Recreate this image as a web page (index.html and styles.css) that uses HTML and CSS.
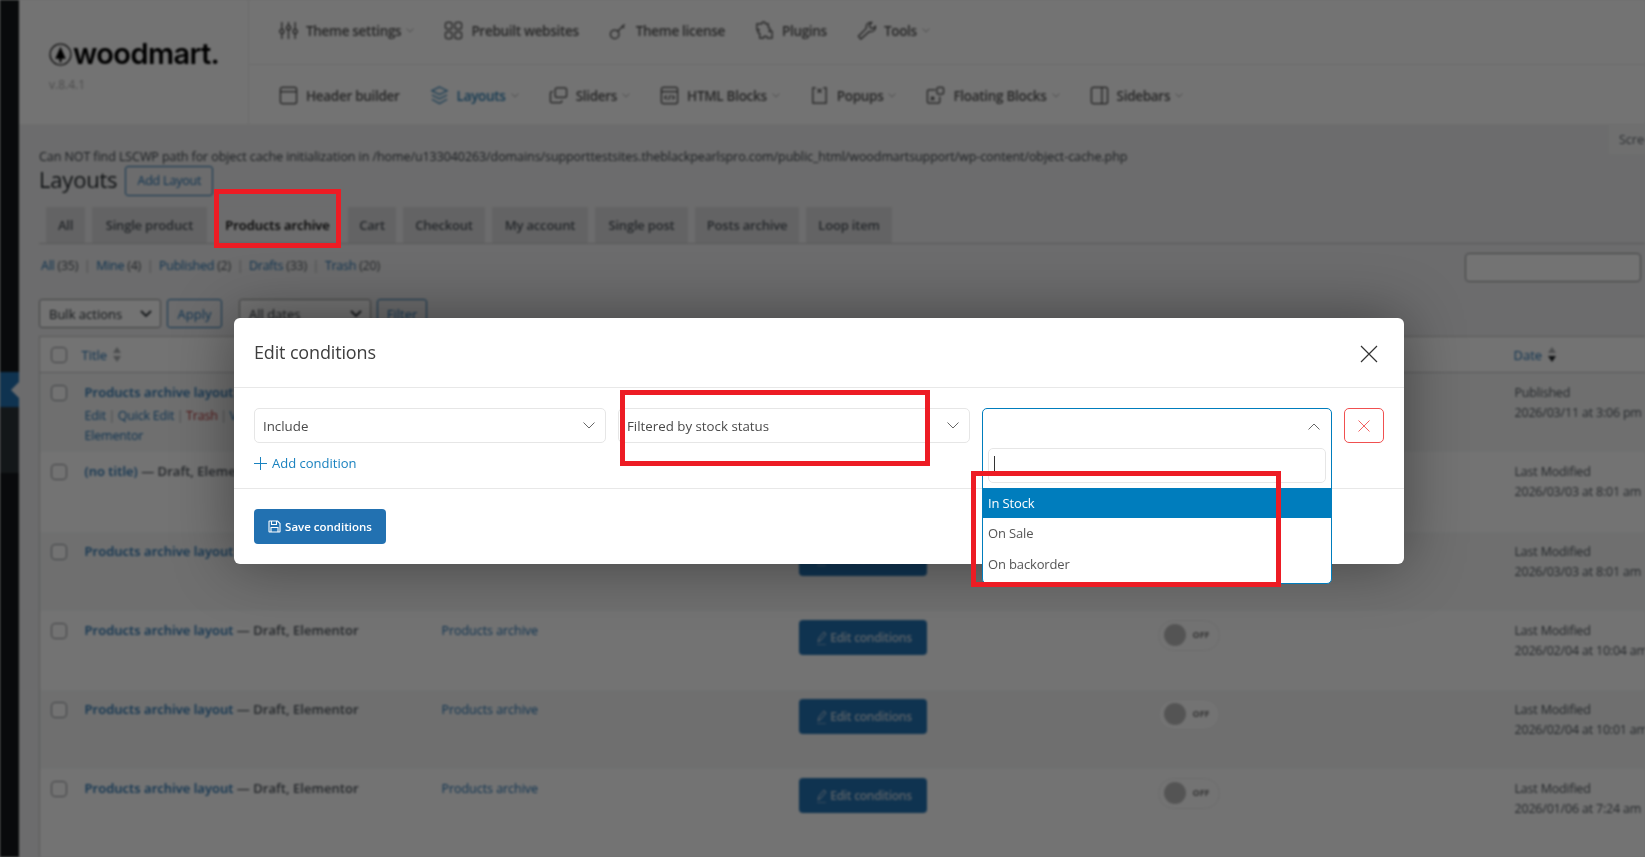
FILE: index.html
```html
<!DOCTYPE html>
<html lang="en">
<head>
<meta charset="utf-8">
<title>Layouts</title>
<link rel="stylesheet" href="styles.css">
</head>
<body>
<div class="page">
  <aside class="adminbar">
    <div class="bar-top"></div>
    <div class="bar-current"><span class="notch"></span></div>
    <div class="bar-sub"></div>
  </aside>
  <main class="main">
    <header class="wd-head">
      <div class="brand">
        <div class="logo">
          <svg class="logo-mark" viewBox="0 0 22 22"><circle cx="11" cy="11" r="10" fill="none" stroke="#000" stroke-width="1"/><path d="M11 3.500 16 15h-4v3.500h-2V15H6z" fill="#000"/></svg>
          <span class="logo-text">woodmart.</span>
        </div>
        <div class="version">v.8.4.1</div>
      </div>
      <div class="navs">
        <nav class="nav-row">
          <a class="nav-item"><svg class="ico" viewBox="0 0 20 20"><path d="M3 1v18M10 1v18M17 1v18"/><circle cx="3" cy="11" r="2.200" fill="#fff"/><circle cx="10" cy="7" r="2.200" fill="#fff"/><circle cx="17" cy="11" r="2.200" fill="#fff"/></svg>Theme settings<svg class="chev" viewBox="0 0 8 5"><path d="M.5.5 4 4 7.500.5"/></svg></a>
          <a class="nav-item"><svg class="ico" viewBox="0 0 20 20"><rect x="1.500" y="1.500" width="7" height="7" rx="2"/><rect x="11.500" y="1.500" width="7" height="7" rx="2"/><rect x="1.500" y="11.500" width="7" height="7" rx="2"/><rect x="11.500" y="11.500" width="7" height="7" rx="2"/></svg>Prebuilt websites</a>
          <a class="nav-item"><svg class="ico" viewBox="0 0 20 20"><circle cx="6" cy="14" r="4.500"/><path d="m9.500 10.500 7-7M13.500 5l2.500 2.500"/></svg>Theme license</a>
          <a class="nav-item"><svg class="ico" viewBox="0 0 20 20"><path d="M2 3h5a2 2 0 0 1 4 0h3v4a2 2 0 0 1 0 4l4 0v7h-5a2 2 0 0 0-4 0H5v-5a2 2 0 0 1 0-4H2z"/></svg>Plugins</a>
          <a class="nav-item"><svg class="ico" viewBox="0 0 20 20"><path d="M1.500 16 10 7.500C9 4 11.500 1 15.500 1.500L13 4.500l1 2.500 2.500 1 3-2.500c.3 4-3 6.500-6.500 5.500L4 19z"/></svg>Tools<svg class="chev" viewBox="0 0 8 5"><path d="M.5.5 4 4 7.500.5"/></svg></a>
        </nav>
        <nav class="nav-row nav-row-2">
          <a class="nav-item"><svg class="ico" viewBox="0 0 20 20"><rect x="1.500" y="1.500" width="17" height="17" rx="2"/><path d="M1.500 6h17"/></svg>Header builder</a>
          <a class="nav-item is-current"><svg class="ico" viewBox="0 0 20 20"><path d="m10 1 8 4-8 4-8-4zM2 9.500l8 4 8-4M2 14l8 4.500L18 14"/></svg>Layouts<svg class="chev" viewBox="0 0 8 5"><path d="M.5.5 4 4 7.500.5"/></svg></a>
          <a class="nav-item"><svg class="ico" viewBox="0 0 20 20"><rect x="6.500" y="2" width="12" height="10" rx="2"/><path d="M4 6H3a1.500 1.500 0 0 0-1.500 1.500V16A1.500 1.500 0 0 0 3 17.500h9a1.500 1.500 0 0 0 1.500-1.500v-1"/></svg>Sliders<svg class="chev" viewBox="0 0 8 5"><path d="M.5.5 4 4 7.500.5"/></svg></a>
          <a class="nav-item"><svg class="ico" viewBox="0 0 20 20"><rect x="1.500" y="1.500" width="17" height="17" rx="2"/><path d="M1.500 6h17M7 10l-2 2 2 2M13 10l2 2-2 2M11 9.500 9 14.500"/></svg>HTML Blocks<svg class="chev" viewBox="0 0 8 5"><path d="M.5.5 4 4 7.500.5"/></svg></a>
          <a class="nav-item"><svg class="ico" viewBox="0 0 20 20"><path d="M6 2H3v16h14V2h-3M8 3l4 4M12 3 8 7"/></svg>Popups<svg class="chev" viewBox="0 0 8 5"><path d="M.5.5 4 4 7.500.5"/></svg></a>
          <a class="nav-item"><svg class="ico" viewBox="0 0 20 20"><path d="M10 4H3a1.500 1.500 0 0 0-1.500 1.500v11A1.500 1.500 0 0 0 3 18h10a1.500 1.500 0 0 0 1.500-1.500V11"/><rect x="11.500" y="1.500" width="7" height="7" rx="1.500"/><path d="M5 15l3-3M5 12h3v3"/></svg>Floating Blocks<svg class="chev" viewBox="0 0 8 5"><path d="M.5.5 4 4 7.500.5"/></svg></a>
          <a class="nav-item"><svg class="ico" viewBox="0 0 20 20"><rect x="1.500" y="1.500" width="17" height="17" rx="2"/><path d="M12.500 1.500v17"/></svg>Sidebars<svg class="chev" viewBox="0 0 8 5"><path d="M.5.5 4 4 7.500.5"/></svg></a>
        </nav>
      </div>
    </header>

    <section class="content">
      <div class="notice-row">
        <p class="notice">Can NOT find LSCWP path for object cache initialization in /home/u133040263/domains/supporttestsites.theblackpearlspro.com/public_html/woodmartsupport/wp-content/object-cache.php</p>
        <span class="screen-tab">Screen Options</span>
      </div>
      <div class="title-row">
        <h1 class="page-title">Layouts</h1>
        <a class="add-btn">Add Layout</a>
      </div>
      <div class="tabs">
        <a class="tab tab-all">All</a>
        <a class="tab tab-sp">Single product</a>
        <a class="tab tab-active">Products archive</a>
        <a class="tab tab-cart">Cart</a>
        <a class="tab tab-ch">Checkout</a>
        <a class="tab tab-acc">My account</a>
        <a class="tab tab-post">Single post</a>
        <a class="tab tab-pa">Posts archive</a>
        <a class="tab tab-loop">Loop item</a>
      </div>
      <div class="sub-row">
        <p class="subsub"><a>All</a> (35) <i>|</i> <a>Mine</a> (4) <i>|</i> <a>Published</a> (2) <i>|</i> <a>Drafts</a> (33) <i>|</i> <a>Trash</a> (20)</p>
        <span class="search-box"></span>
      </div>
      <div class="tablenav">
        <span class="fake-select sel-bulk">Bulk actions<svg class="sel-chev" viewBox="0 0 12 7"><path d="m1 1 5 5 5-5"/></svg></span>
        <span class="ghost-btn btn-apply">Apply</span>
        <span class="fake-select sel-dates">All dates<svg class="sel-chev" viewBox="0 0 12 7"><path d="m1 1 5 5 5-5"/></svg></span>
        <span class="ghost-btn btn-filter">Filter</span>
      </div>
      <table class="list">
        <colgroup><col class="c-check"><col class="c-title"><col class="c-type"><col class="c-cond"><col class="c-toggle"><col class="c-date"></colgroup>
        <thead>
          <tr>
            <th><span class="cb"></span></th>
            <th><a class="sort">Title<svg class="sort-ico" viewBox="0 0 8 15"><path d="M4 0l4 6H0zM4 15l4-6H0z"/></svg></a></th>
            <th></th><th></th><th></th>
            <th><a class="sort">Date<svg class="sort-ico sort-date" viewBox="0 0 8 15"><path class="up" d="M4 0l4 6H0z"/><path class="down" d="M4 15l4-6H0z"/></svg></a></th>
          </tr>
        </thead>
        <tbody>
          <tr class="row-1">
            <td><span class="cb"></span></td>
            <td><a class="row-title">Products archive layout</a><span class="state"> — Draft, Elementor</span>
              <div class="row-actions"><a>Edit</a> <i>|</i> <a>Quick Edit</a> <i>|</i> <a class="trash">Trash</a> <i>|</i> <a>View</a><br><a>Elementor</a></div></td>
            <td><a class="type">Products archive</a></td>
            <td><span class="cond"><svg class="pen" viewBox="0 0 12 14"><path d="M2 14h9M3 11l1-4 5-6 2 2-5 6z"/></svg>Edit conditions</span></td>
            <td><span class="toggle"><b></b>OFF</span></td>
            <td class="date">Published<br>2026/03/11 at 3:06 pm</td>
          </tr>
          <tr class="row-2">
            <td><span class="cb"></span></td>
            <td><a class="row-title">(no title)</a><span class="state"> — Draft, Elementor</span></td>
            <td><a class="type">Products archive</a></td>
            <td><span class="cond"><svg class="pen" viewBox="0 0 12 14"><path d="M2 14h9M3 11l1-4 5-6 2 2-5 6z"/></svg>Edit conditions</span></td>
            <td><span class="toggle"><b></b>OFF</span></td>
            <td class="date">Last Modified<br>2026/03/03 at 8:01 am</td>
          </tr>
          <tr>
            <td><span class="cb"></span></td>
            <td><a class="row-title">Products archive layout</a><span class="state"> — Draft, Elementor</span></td>
            <td><a class="type">Products archive</a></td>
            <td><span class="cond"><svg class="pen" viewBox="0 0 12 14"><path d="M2 14h9M3 11l1-4 5-6 2 2-5 6z"/></svg>Edit conditions</span></td>
            <td><span class="toggle"><b></b>OFF</span></td>
            <td class="date">Last Modified<br>2026/03/03 at 8:01 am</td>
          </tr>
          <tr>
            <td><span class="cb"></span></td>
            <td><a class="row-title">Products archive layout</a><span class="state"> — Draft, Elementor</span></td>
            <td><a class="type">Products archive</a></td>
            <td><span class="cond"><svg class="pen" viewBox="0 0 12 14"><path d="M2 14h9M3 11l1-4 5-6 2 2-5 6z"/></svg>Edit conditions</span></td>
            <td><span class="toggle"><b></b>OFF</span></td>
            <td class="date">Last Modified<br>2026/02/04 at 10:04 am</td>
          </tr>
          <tr>
            <td><span class="cb"></span></td>
            <td><a class="row-title">Products archive layout</a><span class="state"> — Draft, Elementor</span></td>
            <td><a class="type">Products archive</a></td>
            <td><span class="cond"><svg class="pen" viewBox="0 0 12 14"><path d="M2 14h9M3 11l1-4 5-6 2 2-5 6z"/></svg>Edit conditions</span></td>
            <td><span class="toggle"><b></b>OFF</span></td>
            <td class="date">Last Modified<br>2026/02/04 at 10:01 am</td>
          </tr>
          <tr class="row-last">
            <td><span class="cb"></span></td>
            <td><a class="row-title">Products archive layout</a><span class="state"> — Draft, Elementor</span></td>
            <td><a class="type">Products archive</a></td>
            <td><span class="cond"><svg class="pen" viewBox="0 0 12 14"><path d="M2 14h9M3 11l1-4 5-6 2 2-5 6z"/></svg>Edit conditions</span></td>
            <td><span class="toggle"><b></b>OFF</span></td>
            <td class="date">Last Modified<br>2026/01/06 at 7:24 am</td>
          </tr>
        </tbody>
      </table>
    </section>
  </main>
</div>

<div class="overlay"></div>

<div class="modal">
  <div class="modal-head">
    <h2 class="modal-title">Edit conditions</h2>
    <svg class="close" viewBox="0 0 18 18"><path d="m1 1 16 16M17 1 1 17"/></svg>
  </div>
  <div class="modal-body">
    <div class="cond-row">
      <div class="col">
        <div class="m-select">Include<svg class="m-chev" viewBox="0 0 12 7"><path d="m.5.500 5.500 5.500L11.500.5"/></svg></div>
        <a class="add-cond"><svg class="plus" viewBox="0 0 13 13"><path d="M6.500 0v13M0 6.500h13"/></svg>Add condition</a>
      </div>
      <div class="col">
        <div class="m-select">Filtered by stock status<svg class="m-chev" viewBox="0 0 12 7"><path d="m.5.500 5.500 5.500L11.500.5"/></svg></div>
      </div>
      <div class="col col-open">
        <div class="dropdown">
          <div class="dd-head"><svg class="m-chev" viewBox="0 0 12 7"><path d="M.5 6.500 6 1l5.500 5.500"/></svg></div>
          <div class="dd-search"><span class="caret"></span></div>
          <ul class="dd-list">
            <li class="is-hl">In Stock</li>
            <li>On Sale</li>
            <li class="last">On backorder</li>
          </ul>
        </div>
      </div>
      <button class="del" type="button"><svg viewBox="0 0 12 12"><path d="m.5.500 11 11M11.500.5l-11 11"/></svg></button>
    </div>
  </div>
  <div class="modal-foot">
    <button class="save" type="button"><svg viewBox="0 0 13 13"><path d="M1.500 1h8L12 3.500v8a.5.500 0 0 1-.5.500h-10a.5.500 0 0 1-.5-.5v-10A.5.500 0 0 1 1.500 1zM3.500 1v3.500h5V1M3 12V7.500h7V12"/></svg>Save conditions</button>
  </div>
</div>

<span class="mark mark-tab"></span>
<span class="mark mark-filter"></span>
<span class="mark mark-options"></span>
</body>
</html>
```
FILE: styles.css
```css
* { box-sizing: border-box; }
html, body { margin: 0; height: 100%; overflow: hidden; background: #f0f0f1; }
body { font-family: "Open Sans", "Noto Sans", sans-serif; font-size: 13px; color: #3c434a; position: relative; }
p, h1, h2, ul { margin: 0; padding: 0; }
i { font-style: normal; }

.page { display: flex; height: 857px; width: 1645px; filter: blur(1.3px); overflow: hidden; }
.overlay { position: fixed; inset: 0; background: rgba(0,0,0,.55); }

/* admin strip */
.adminbar { width: 19px; flex: none; background: #14181b; display: flex; flex-direction: column; }
.bar-top { height: 372px; }
.bar-current { height: 35px; background: #2271b1; position: relative; }
.notch { position: absolute; right: 0; top: 10px; border: 8px solid transparent; border-right-color: #f0f0f1; border-left: 0; }
.bar-sub { height: 66px; background: #2c3338; }

.main { flex: 1; min-width: 0; overflow: hidden; }

/* theme header */
.wd-head { display: flex; height: 125px; background: #fff; border-bottom: 1px solid #f0f0f0; }
.brand { width: 230px; flex: none; border-right: 1px solid #eee; padding: 38px 0 0 30px; }
.logo { display: flex; align-items: center; height: 32px; }
.logo-mark { width: 23px; height: 23px; flex: none; margin-right: 1px; }
.logo-text { font-family: Inter, "Open Sans", sans-serif; font-size: 29px; font-weight: 600; color: #000; letter-spacing: -.6px; line-height: 32px; }
.version { color: #aaa; font-size: 12px; margin-top: 6px; }
.navs { flex: 1; }
.nav-row { display: flex; align-items: center; gap: 30px; height: 65px; padding: 0 0 3px 30px; border-bottom: 1px solid #eee; }
.nav-row-2 { height: 60px; border-bottom: 0; padding: 1px 0 0 30px; }
.nav-item { display: flex; align-items: center; font-size: 13.5px; font-weight: 600; color: #555; white-space: nowrap; letter-spacing: -.3px; }
.nav-item.is-current { color: #2e80b5; }
.ico { width: 19px; height: 19px; margin-right: 8px; flex: none; fill: none; stroke: #444; stroke-width: 1.3; }
.is-current .ico { stroke: #2e80b5; }
.chev { width: 8px; height: 5px; margin-left: 5px; fill: none; stroke: #aaa; }

/* content */
.content { padding-left: 20px; }
.notice-row { display: flex; height: 41px; overflow: hidden; }
.notice { align-self: flex-end; flex: 1; line-height: 18px; font-size: 12.5px; color: #3c434a; letter-spacing: -.08px; white-space: nowrap; }
.screen-tab { width: 100px; flex: none; height: 29px; margin-right: -64px; background: #f6f7f7; color: #646970; padding: 6px 0 0 10px; font-size: 12.5px; white-space: nowrap; overflow: hidden; }
.title-row { display: flex; align-items: center; height: 30px; }
.page-title { font-size: 22px; font-weight: 400; color: #1d2327; letter-spacing: -.2px; margin-top: -5px; }
.add-btn { margin-left: 8px; height: 30px; width: 88px; padding-bottom: 2px; border: 1px solid #2271b1; border-radius: 3px; color: #2271b1; display: flex; align-items: center; justify-content: center; font-size: 12.5px; letter-spacing: -.2px; }

.tabs { display: flex; gap: 7px; margin-top: 11px; height: 37px; padding-left: 7px; border-bottom: 1px solid #c3c4c7; }
.tab { height: 36px; background: #dcdcde; color: #50575e; font-size: 13px; font-weight: 600; display: flex; align-items: center; justify-content: center; white-space: nowrap; letter-spacing: -.2px; }
.tab-all { width: 39px; }
.tab-sp { width: 115px; }
.tab-active { width: 127px; background: #f0f0f1; color: #000; letter-spacing: -.05px; }
.tab-cart { width: 48px; }
.tab-ch { width: 82px; }
.tab-acc { width: 96px; }
.tab-post { width: 93px; }
.tab-pa { width: 104px; }
.tab-loop { width: 86px; }

.sub-row { display: flex; justify-content: space-between; align-items: center; height: 29px; margin-top: 9px; padding-right: 4px; }
.subsub { font-size: 12.5px; color: #50575e; padding: 0 0 4px 2px; letter-spacing: -.25px; }
.subsub a { color: #2271b1; }
.subsub i { margin: 0 2.7px; color: #a7aaad; }
.search-box { width: 176px; height: 29px; background: #fff; border: 1px solid #8c8f94; border-radius: 4px; }

.tablenav { display: flex; gap: 6px; margin-top: 17px; height: 29px; }
.fake-select { height: 29px; width: 122px; border: 1px solid #8c8f94; border-radius: 3px; background: #fff; display: flex; align-items: center; justify-content: space-between; padding: 0 8px 0 9px; font-size: 13px; color: #2c3338; }
.sel-dates { width: 132px; margin-left: 11px; }
.sel-chev { width: 12px; height: 7px; fill: none; stroke: #2c3338; stroke-width: 1.800; }
.ghost-btn { height: 29px; border: 1px solid #2271b1; border-radius: 3px; color: #2271b1; display: flex; align-items: center; justify-content: center; font-size: 13px; }
.btn-apply { width: 55px; }
.btn-filter { width: 50px; }

/* list table */
.list { table-layout: fixed; border-collapse: collapse; width: 1800px; margin-top: 8px; border: 1px solid #c3c4c7; background: #fff; }
.c-check { width: 42px; }
.c-title { width: 359px; }
.c-type { width: 358px; }
.c-cond { width: 359px; }
.c-toggle { width: 356px; }
.list th { height: 36px; padding: 0; text-align: left; font-weight: 400; border-bottom: 1px solid #c3c4c7; background: #fff; }
.list th:first-child, .list td:first-child { padding-left: 11px; }
.list td { padding: 9px 0 0; vertical-align: top; height: 79px; line-height: 20px; }
.list tbody tr:nth-child(odd) { background: #f6f7f7; }
.list tbody tr.row-2 td { height: 80px; }
.list tbody tr.row-last td { height: 120px; }
.cb { display: block; width: 16px; height: 16px; border: 1px solid #8c8f94; border-radius: 4px; background: #fff; }
.list td .cb { margin-top: 3px; }
.sort { color: #2271b1; font-size: 13px; display: inline-flex; align-items: center; }
.sort-ico { width: 8px; height: 15px; margin-left: 6px; fill: #a7aaad; }
.sort-date .up { fill: #a7aaad; }
.sort-date .down { fill: #1d2327; }
.row-title { color: #2271b1; font-weight: 600; font-size: 13px; letter-spacing: .04px; margin-left: 3px; }
.state { color: #50575e; font-weight: 600; font-size: 13px; letter-spacing: .04px; }
.row-actions { font-size: 12.5px; color: #a7aaad; margin: 4px 0 0 3px; line-height: 20px; letter-spacing: -.2px; }
.row-actions i { margin: 0 -.5px; }
.row-actions a { color: #2271b1; }
.row-actions a.trash { color: #b32d2e; }
.type { color: #2271b1; font-size: 12.5px; letter-spacing: -.05px; margin-left: 1px; }
.cond { display: inline-flex; width: 128px; height: 35px; padding: 2px 0 0 2px; align-items: center; justify-content: center; background: #2271b1; color: #c8d8e6; border-radius: 4px; font-size: 12px; font-weight: 600; letter-spacing: -.3px; }
.pen { width: 12px; height: 14px; margin-right: 3px; fill: none; stroke: #c8d8e6; }
.toggle { display: inline-flex; width: 62px; height: 31px; align-items: center; border: 1px solid #eee; border-radius: 16px; padding-left: 5px; font-size: 9px; font-weight: 700; color: #777; background: #fff; }
.toggle b { width: 22px; height: 22px; border-radius: 50%; background: #bbb; margin-right: 7px; }
.list td.date { color: #50575e; font-size: 12.5px; letter-spacing: -.2px; padding: 10px 0 0 1px; white-space: nowrap; }

/* modal */
.modal { position: absolute; left: 234px; top: 318px; width: 1170px; height: 246px; background: #fff; border-radius: 6px; box-shadow: 0 0 60px rgba(0,0,0,.4); display: flex; flex-direction: column; }
.modal-head { height: 70px; flex: none; display: flex; align-items: center; justify-content: space-between; padding: 0 26px 1px 20px; border-bottom: 1px solid #e8e8e8; }
.modal-title { font-size: 18px; font-weight: 500; color: #3e3e3e; letter-spacing: -.15px; }
.close { width: 18px; height: 18px; margin-top: 3px; fill: none; stroke: #333; stroke-width: 1.200; }
.modal-body { height: 101px; flex: none; padding: 20px 20px 0; border-bottom: 1px solid #e8e8e8; }
.cond-row { display: flex; gap: 12px; align-items: flex-start; }
.col { width: 352px; flex: none; }
.col-open { width: 350px; position: relative; height: 35px; }
.m-select { height: 35px; border: 1px solid #e6e6e6; border-radius: 5px; display: flex; align-items: center; justify-content: space-between; padding: 0 10px 0 8px; font-size: 13.300px; color: #4a4a4a; }
.m-chev { width: 12px; height: 7px; fill: none; stroke: #555; stroke-width: .9; }
.add-cond { display: flex; align-items: center; margin-top: 10px; height: 20px; color: #1a82bf; font-size: 13px; font-weight: 500; }
.plus { width: 13px; height: 13px; margin-right: 5px; fill: none; stroke: #1a82bf; stroke-width: 1; }
.dropdown { position: absolute; left: 0; top: 0; width: 350px; height: 176px; background: #fff; border: 1px solid #007dbd; border-radius: 5px; overflow: hidden; }
.dd-head { height: 39px; display: flex; align-items: center; justify-content: flex-end; padding: 0 11px 4px 0; }
.dd-search { height: 35px; margin: 0 5px; border: 1px solid #e6e6e6; border-radius: 5px; padding: 7px 0 0 5px; }
.caret { display: block; width: 1px; height: 17px; background: #333; }
.dd-list { list-style: none; margin-top: 5px; }
.dd-list li { height: 30px; display: flex; align-items: center; padding-left: 5px; font-size: 13px; color: #555; letter-spacing: -.15px; }
.dd-list li.is-hl { background: #007dbd; color: #fff; }
.dd-list li.last { height: 32px; }
.del { width: 40px; height: 35px; flex: none; padding: 0; background: #fff; border: 1px solid #f05050; border-radius: 5px; display: flex; align-items: center; justify-content: center; }
.del svg { width: 12px; height: 12px; fill: none; stroke: #f05050; stroke-width: .9; }
.modal-foot { padding: 20px; }
.save { width: 132px; height: 35px; background: #2271b1; color: #fff; border: 0; border-radius: 4px; display: flex; align-items: center; justify-content: center; padding: 0; font-family: inherit; font-size: 11.500px; font-weight: 600; }
.save svg { width: 13px; height: 13px; margin-right: 4px; fill: none; stroke: #fff; stroke-width: 1.100; }

/* annotation rectangles */
.mark { position: absolute; border: 5px solid #ed1c24; }
.mark-tab { left: 214px; top: 189px; width: 127px; height: 59px; }
.mark-filter { left: 620px; top: 390px; width: 310px; height: 76px; }
.mark-options { left: 971px; top: 471px; width: 310px; height: 116px; }
```
